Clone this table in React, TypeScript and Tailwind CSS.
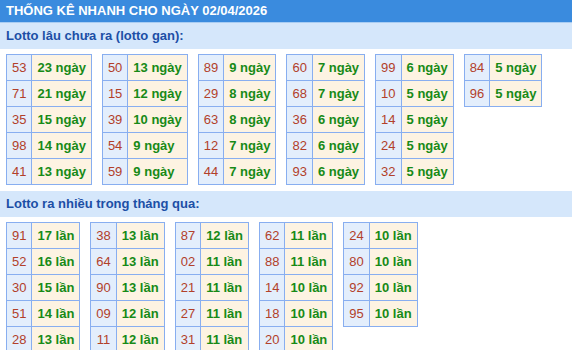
import React from 'react';

const gan: [string, string][][] = [
  [['53', '23 ngày'], ['71', '21 ngày'], ['35', '15 ngày'], ['98', '14 ngày'], ['41', '13 ngày']],
  [['50', '13 ngày'], ['15', '12 ngày'], ['39', '10 ngày'], ['54', '9 ngày'], ['59', '9 ngày']],
  [['89', '9 ngày'], ['29', '8 ngày'], ['63', '8 ngày'], ['12', '7 ngày'], ['44', '7 ngày']],
  [['60', '7 ngày'], ['68', '7 ngày'], ['36', '6 ngày'], ['82', '6 ngày'], ['93', '6 ngày']],
  [['99', '6 ngày'], ['10', '5 ngày'], ['14', '5 ngày'], ['24', '5 ngày'], ['32', '5 ngày']],
  [['84', '5 ngày'], ['96', '5 ngày']],
];

const nhieu: [string, string][][] = [
  [['91', '17 lần'], ['52', '16 lần'], ['30', '15 lần'], ['51', '14 lần'], ['28', '13 lần']],
  [['38', '13 lần'], ['64', '13 lần'], ['90', '13 lần'], ['09', '12 lần'], ['11', '12 lần']],
  [['87', '12 lần'], ['02', '11 lần'], ['21', '11 lần'], ['27', '11 lần'], ['31', '11 lần']],
  [['62', '11 lần'], ['88', '11 lần'], ['14', '10 lần'], ['18', '10 lần'], ['20', '10 lần']],
  [['24', '10 lần'], ['80', '10 lần'], ['92', '10 lần'], ['95', '10 lần']],
];

const LottoTable: React.FC<{ rows: [string, string][] }> = ({ rows }) => (
  <table className="border-collapse self-start">
    <tbody>
      {rows.map(([n, t], i) => (
        <tr key={i} className="h-[26px]">
          <td className="border border-[#88aef0] bg-[#e3eefc] px-[5px] text-center text-[13px] text-[#b2402a]">{n}</td>
          <td className="border border-[#88aef0] bg-[#fdf3e2] px-[5px] text-left text-[13px] font-bold text-[#178a17]">{t}</td>
        </tr>
      ))}
    </tbody>
  </table>
);

const Section: React.FC<{ title: string; tables: [string, string][][] }> = ({ title, tables }) => (
  <div>
    <div className="h-[26px] bg-[#d5e7fb] pl-[6px] text-[13px] font-bold leading-[26px] text-[#1c4fa6]">{title}</div>
    <div className="flex gap-[10px] pl-[6px] pt-[5px] pb-[6px]">
      {tables.map((rows, i) => (
        <LottoTable key={i} rows={rows} />
      ))}
    </div>
  </div>
);

export default function App() {
  return (
    <div className="w-[572px] bg-white" style={{ fontFamily: '"Liberation Sans", Arial, sans-serif' }}>
      <div className="h-[22px] bg-[#3a8bde] pl-[6px] text-[13px] font-bold leading-[22px] text-white">
        THỐNG KÊ NHANH CHO NGÀY 02/04/2026
      </div>
      <div className="h-px bg-[#a9cdf3]" />
      <Section title="Lotto lâu chưa ra (lotto gan):" tables={gan} />
      <Section title="Lotto ra nhiều trong tháng qua:" tables={nhieu} />
    </div>
  );
}
